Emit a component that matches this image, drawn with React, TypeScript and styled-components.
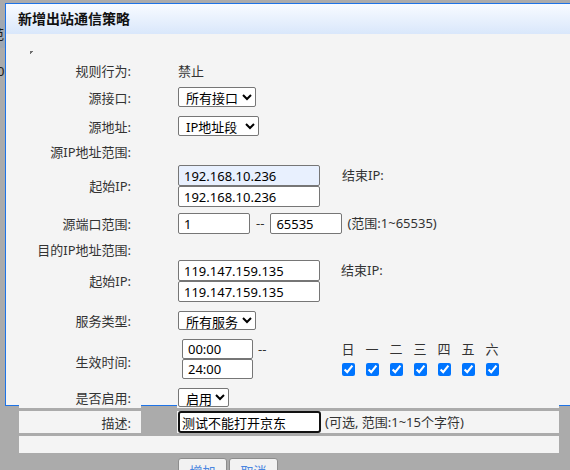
import React from 'react'
import styled, { createGlobalStyle } from 'styled-components'

const GlobalStyle = createGlobalStyle`
  html, body {
    margin: 0;
    padding: 0;
  }
  body {
    background: #ababab;
    font-family: "Noto Sans", "Noto Sans CJK SC", sans-serif;
  }
`

const Page = styled.div`
  width: 570px;
  height: 470px;
  overflow: hidden;
  display: flex;
  align-items: flex-start;
  background: #ababab;
  font-size: 13px;
  color: #333;
`

// bits of the page that sits behind the dialog
const BehindStrip = styled.div`
  width: 5px;
  flex-shrink: 0;
  overflow: hidden;
  padding-top: 20px;
  color: #1a1a1a;
  white-space: nowrap;
`

const BehindBand = styled.div`
  height: 28px;
  line-height: 28px;
  margin-left: -9px;
  background: #a0a8b2;
`

const BehindText = styled.div`
  margin-top: 15px;
  margin-left: -3px;
  line-height: 16px;
`

const Dialog = styled.div`
  margin-top: 3px;
  width: 620px;
  height: 403px;
  flex-shrink: 0;
  box-sizing: border-box;
  border: 1px solid #1e73e6;
  border-left-width: 1px;
  background: #f4f4f4;
`

const TitleBar = styled.div`
  height: 30px;
  line-height: 30px;
  padding-left: 12px;
  background: linear-gradient(#f8fbff, #d9e7fb);
  font-size: 14px;
  font-weight: bold;
  color: #111;
`

const Content = styled.div`
  padding-top: 17px;
`

const Mark = styled.div`
  width: 4px;
  height: 3px;
  margin-left: 24px;
  background: linear-gradient(135deg, #6f6f6f 55%, transparent 55%);
`

const Form = styled.div`
  width: 540px;
  margin: 5px 0 0 13px;
  display: flex;
  flex-direction: column;
  gap: 3px;
`

const Row = styled.div<{ $h?: number }>`
  display: grid;
  grid-template-columns: 122px 36px 382px;
  height: ${(p) => (p.$h ? `${p.$h}px` : 'auto')};
`

const LabelCell = styled.div`
  grid-column: 1;
  display: flex;
  align-items: center;
  justify-content: flex-end;
  padding-right: 10px;
  background: #f4f4f4;
  color: #333;
  white-space: nowrap;
`

const ValueCell = styled.div<{ $top?: boolean; $pad?: number }>`
  grid-column: 3;
  display: flex;
  align-items: ${(p) => (p.$top ? 'flex-start' : 'center')};
  padding-left: ${(p) => p.$pad ?? 1}px;
  padding-top: ${(p) => (p.$top ? 1 : 0)}px;
  background: #f4f4f4;
  white-space: nowrap;
`

const FullCell = styled.div`
  grid-column: 1 / 4;
  background: #f4f4f4;
`

const ButtonCell = styled.div`
  grid-column: 3;
  display: flex;
  gap: 2px;
  padding: 2px 0 0 1px;
`

const Select = styled.select<{ $w: number; $h?: number }>`
  box-sizing: border-box;
  width: ${(p) => p.$w}px;
  height: ${(p) => p.$h ?? 20}px;
  margin: 0;
  padding: 0 0 0 3px;
  border: 1px solid #767676;
  border-radius: 2px;
  background: #fff;
  font-family: inherit;
  font-size: 13px;
  color: #000;
`

const TextInput = styled.input<{ $w: number; $h?: number; $fill?: boolean }>`
  display: block;
  box-sizing: border-box;
  width: ${(p) => p.$w}px;
  height: ${(p) => p.$h ?? 21}px;
  margin: 0;
  padding: 0 5px;
  border: 1px solid #767676;
  border-radius: 2px;
  background: ${(p) => (p.$fill ? '#e8f0fe' : '#fff')};
  font-family: inherit;
  font-size: 13px;
  color: #000;
  outline: none;
`

const DescInput = styled(TextInput)`
  border: 2px solid #111;
  border-radius: 3px;
  padding: 0 2px;
`

const Stack = styled.div`
  display: flex;
  flex-direction: column;
`

const SideText = styled.span<{ $ml: number }>`
  margin-left: ${(p) => p.$ml}px;
  line-height: 21px;
  color: #333;
`

const Dash = styled.span`
  display: inline-block;
  width: 10px;
  margin-left: 5px;
  line-height: 20px;
  color: #333;
`

const Days = styled.div`
  margin-left: 68px;
  display: grid;
  grid-template-columns: repeat(7, 24px);
  grid-template-rows: 20px 13px;
  row-gap: 4px;
  justify-items: center;
  align-items: center;
`

const DayName = styled.span`
  line-height: 20px;
  color: #333;
`

const DayCheck = styled.input`
  width: 13px;
  height: 13px;
  margin: 0;
  accent-color: #0075ff;
`

const Button = styled.button`
  box-sizing: border-box;
  width: 49px;
  height: 24px;
  padding: 0;
  border: 1px solid #8d8d8d;
  border-radius: 3px;
  background: #f2f2f2;
  font-family: inherit;
  font-size: 13px;
  color: #4a86e0;
`

const days = ['日', '一', '二', '三', '四', '五', '六']

export default function App() {
  return (
    <>
      <GlobalStyle />
      <Page>
        <BehindStrip>
          <BehindBand>范</BehindBand>
          <BehindText>0</BehindText>
        </BehindStrip>

        <Dialog>
          <TitleBar>新增出站通信策略</TitleBar>
          <Content>
            <Mark />
            <Form>
              <Row $h={22}>
                <LabelCell>规则行为:</LabelCell>
                <ValueCell>禁止</ValueCell>
              </Row>

              <Row $h={26}>
                <LabelCell>源接口:</LabelCell>
                <ValueCell>
                  <Select $w={78} defaultValue="all">
                    <option value="all">所有接口</option>
                  </Select>
                </ValueCell>
              </Row>

              <Row $h={26}>
                <LabelCell>源地址:</LabelCell>
                <ValueCell>
                  <Select $w={81} defaultValue="range">
                    <option value="range">IP地址段</option>
                  </Select>
                </ValueCell>
              </Row>

              <Row $h={19}>
                <LabelCell>源IP地址范围:</LabelCell>
              </Row>

              <Row $h={43}>
                <LabelCell>起始IP:</LabelCell>
                <ValueCell $top>
                  <Stack>
                    <TextInput $w={142} $fill defaultValue="192.168.10.236" />
                    <TextInput $w={142} defaultValue="192.168.10.236" />
                  </Stack>
                  <SideText $ml={22}>结束IP:</SideText>
                </ValueCell>
              </Row>

              <Row $h={27}>
                <LabelCell>源端口范围:</LabelCell>
                <ValueCell>
                  <TextInput $w={72} defaultValue="1" />
                  <SideText $ml={6}>--</SideText>
                  <TextInput $w={72} style={{ marginLeft: 6 }} defaultValue="65535" />
                  <SideText $ml={5}>(范围:1~65535)</SideText>
                </ValueCell>
              </Row>

              <Row $h={16}>
                <LabelCell>目的IP地址范围:</LabelCell>
              </Row>

              <Row $h={43}>
                <LabelCell>起始IP:</LabelCell>
                <ValueCell $top>
                  <Stack>
                    <TextInput $w={142} defaultValue="119.147.159.135" />
                    <TextInput $w={142} defaultValue="119.147.159.135" />
                  </Stack>
                  <SideText $ml={21}>结束IP:</SideText>
                </ValueCell>
              </Row>

              <Row $h={30}>
                <LabelCell>服务类型:</LabelCell>
                <ValueCell>
                  <Select $w={78} $h={19} defaultValue="all">
                    <option value="all">所有服务</option>
                  </Select>
                </ValueCell>
              </Row>

              <Row $h={46}>
                <LabelCell>生效时间:</LabelCell>
                <ValueCell $top $pad={5}>
                  <Stack>
                    <TextInput $w={71} $h={20} defaultValue="00:00" />
                    <TextInput $w={71} $h={20} defaultValue="24:00" />
                  </Stack>
                  <Dash>--</Dash>
                  <Days>
                    {days.map((d) => (
                      <DayName key={d}>{d}</DayName>
                    ))}
                    {days.map((d) => (
                      <DayCheck key={d} type="checkbox" defaultChecked />
                    ))}
                  </Days>
                </ValueCell>
              </Row>

              <Row $h={21}>
                <LabelCell>是否启用:</LabelCell>
                <ValueCell>
                  <Select $w={51} $h={19} defaultValue="on">
                    <option value="on">启用</option>
                  </Select>
                </ValueCell>
              </Row>

              <Row $h={22}>
                <LabelCell>描述:</LabelCell>
                <ValueCell>
                  <DescInput $w={143} $h={22} defaultValue="测试不能打开京东" />
                  <SideText $ml={4}>(可选, 范围:1~15个字符)</SideText>
                </ValueCell>
              </Row>

              <Row $h={17}>
                <FullCell />
              </Row>

              <Row>
                <ButtonCell>
                  <Button>增加</Button>
                  <Button>取消</Button>
                </ButtonCell>
              </Row>
            </Form>
          </Content>
        </Dialog>
      </Page>
    </>
  )
}
